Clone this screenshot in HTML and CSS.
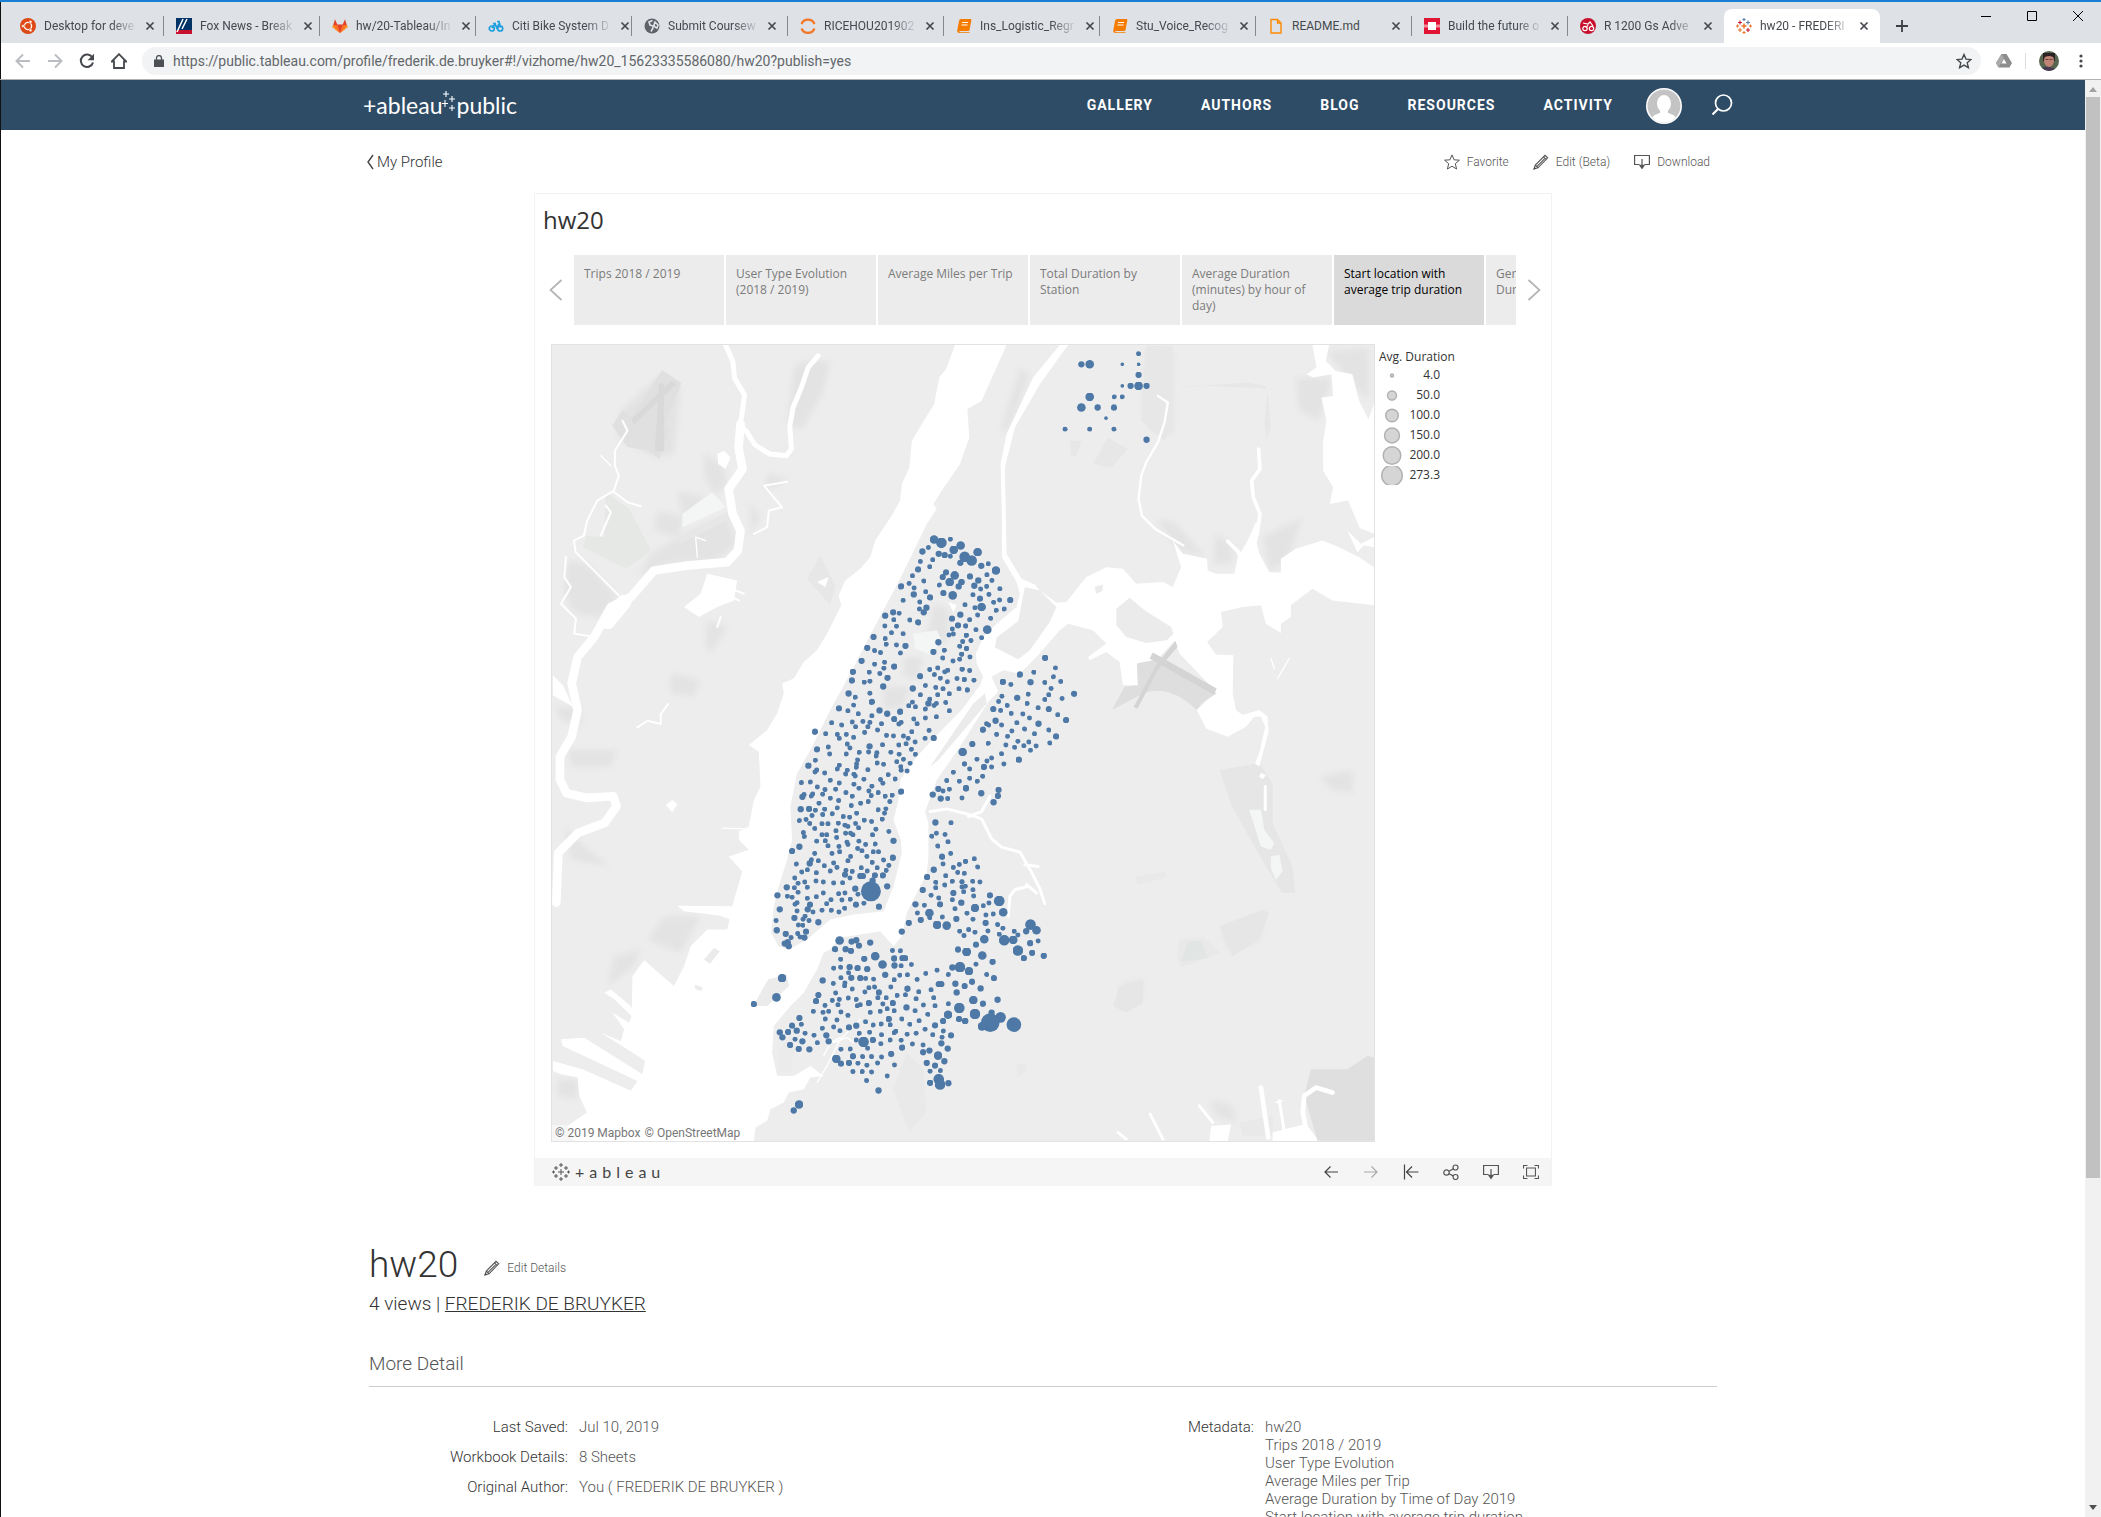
FILE: index.html
```html
<!DOCTYPE html>
<html lang="en">
<head>
<meta charset="utf-8">
<meta name="viewport" content="width=device-width, initial-scale=1">
<title>hw20 - FREDERIK DE BRUYKER | Tableau Public</title>
<link rel="stylesheet" href="styles.css">
</head>
<body>
<svg class="defs" width="0" height="0" aria-hidden="true">
  <symbol id="i-close" viewBox="0 0 16 16"><path d="M4.500 4.500l7 7M11.500 4.500l-7 7" fill="none" stroke="#45494d" stroke-width="1.700"/></symbol>
  <symbol id="i-pencil" viewBox="0 0 16 16"><path d="M1 15l1.300-4L12 1.300l2.700 2.500L5 13.800zM2.300 11L5 13.800M10.500 2.800l2.700 2.600M4 12.300l8-8" fill="none" stroke="#555" stroke-width="1.100"/><path d="M.5 15.500l.8-2.800 2 2z" fill="#444"/></symbol>
  <symbol id="i-download" viewBox="0 0 16 16"><path d="M5.500 10.500H.6V1.500h14.800v9h-4.900" fill="none" stroke="#555" stroke-width="1.200"/><path d="M8 5v7" stroke="#555" stroke-width="1.200"/><path d="M4.800 10.800h6.400L8 15.500z" fill="#555"/></symbol>
  <symbol id="i-book" viewBox="0 0 16 16"><path d="M5 1h9.500c.6 0 1 .5.900 1.100L13.500 12c-.1.600-.5 1-1.100 1H4c-1 0-1 1.300 0 1.300h9.500V15H3.500C1.800 15 1 13.800 1.300 12.300L3 3c.2-1.200.9-2 2-2z" fill="#f57c00"/><path d="M6 4.500h6M5.500 7h6" stroke="#fff" stroke-width="1"/></symbol>
</svg>

<header class="browser">
  <div class="tabstrip">
    <div class="tab"><svg class="fav" viewBox="0 0 16 16"><circle cx="8" cy="8" r="8" fill="#dd4814"/><circle cx="8" cy="8" r="3.600" fill="none" stroke="#fff" stroke-width="1.400"/><g fill="#fff" stroke="#dd4814" stroke-width=".6"><circle cx="3" cy="8" r="1.500"/><circle cx="10.500" cy="3.700" r="1.500"/><circle cx="10.500" cy="12.300" r="1.500"/></g></svg><span class="name">Desktop for deve</span><button aria-label="Close tab"><svg><use href="#i-close"/></svg></button></div>
    <div class="tab"><svg class="fav" viewBox="0 0 16 16"><path fill="#003366" d="M0 0h16v12H0z"/><path fill="#c8102e" d="M0 12h16v4H0z"/><path d="M1 14L7 1M6 11l5-10" stroke="#fff" stroke-width="1.500"/></svg><span class="name">Fox News - Break</span><button aria-label="Close tab"><svg><use href="#i-close"/></svg></button></div>
    <div class="tab"><svg class="fav" viewBox="0 0 16 16"><path fill="#e24329" d="M8 15L.5 9.300 3 1.200 5.300 6.500h5.400L13 1.200l2.500 8.100z"/><path fill="#fc6d26" d="M8 15L1 7h4.500zM8 15l7-8h-4.500z"/><path fill="#fca326" d="M1 7L.5 9.300 8 15zM15 7l.5 2.300L8 15z"/></svg><span class="name">hw/20-Tableau/In</span><button aria-label="Close tab"><svg><use href="#i-close"/></svg></button></div>
    <div class="tab"><svg class="fav" viewBox="0 0 16 16"><g fill="none" stroke="#1d9fe0" stroke-width="1.700"><circle cx="3.800" cy="10.500" r="2.500"/><circle cx="12.200" cy="10.500" r="2.500"/><path d="M4 10l3-4 2 4 2-4M9 3.500h2l1.500 6M5 5.500h3"/></g></svg><span class="name">Citi Bike System D</span><button aria-label="Close tab"><svg><use href="#i-close"/></svg></button></div>
    <div class="tab"><svg class="fav" viewBox="0 0 16 16"><circle cx="8" cy="8" r="7.500" fill="#5f6368"/><path d="M8.500 2.500L5 4l1 3 3 1v2l-2 3.500M11 4l3 3-1 3-2-1-1-2z" fill="none" stroke="#dee1e6" stroke-width="1.600"/></svg><span class="name">Submit Coursew</span><button aria-label="Close tab"><svg><use href="#i-close"/></svg></button></div>
    <div class="tab"><svg class="fav" viewBox="0 0 16 16"><path d="M1.500 6a7 7 0 0 1 13 0M1.500 10.500a7 7 0 0 0 13 0" fill="none" stroke="#f37726" stroke-width="2.200"/></svg><span class="name">RICEHOU201902</span><button aria-label="Close tab"><svg><use href="#i-close"/></svg></button></div>
    <div class="tab"><svg class="fav"><use href="#i-book"/></svg><span class="name">Ins_Logistic_Regr</span><button aria-label="Close tab"><svg><use href="#i-close"/></svg></button></div>
    <div class="tab"><svg class="fav"><use href="#i-book"/></svg><span class="name">Stu_Voice_Recog</span><button aria-label="Close tab"><svg><use href="#i-close"/></svg></button></div>
    <div class="tab"><svg class="fav" viewBox="0 0 16 16"><path d="M3 1.500h6.500L13 5v10H3zM9.500 1.500V5H13" fill="none" stroke="#fb8c00" stroke-width="1.400"/></svg><span class="name whole">README.md</span><button aria-label="Close tab"><svg><use href="#i-close"/></svg></button></div>
    <div class="tab"><svg class="fav" viewBox="0 0 16 16"><path d="M0 0h16v16H0z" fill="#e01434"/><path d="M4 4h8v8H4z" fill="#fff"/><path d="M0 6.500h4v3H0zM12 6.500h4v3h-4z" fill="#f58a9c"/></svg><span class="name">Build the future o</span><button aria-label="Close tab"><svg><use href="#i-close"/></svg></button></div>
    <div class="tab"><svg class="fav" viewBox="0 0 16 16"><circle cx="8" cy="8" r="8" fill="#c8102e"/><g fill="none" stroke="#fff" stroke-width="1.200"><circle cx="5" cy="10.500" r="2.200"/><circle cx="11.500" cy="10.500" r="2.200"/><path d="M3 5l5 1 2-2 3 4M6 10l2-3"/></g></svg><span class="name">R 1200 Gs Adve</span><button aria-label="Close tab"><svg><use href="#i-close"/></svg></button></div>
    <div class="tab active"><svg class="fav" viewBox="0 0 16 16"><path d="M8 5.500v5M5.500 8h5" stroke="#e8762d" stroke-width="1.500"/><path d="M4 2.500v4M2 4.500h4M12 10v4M10 12h4" stroke="#c72035" stroke-width="1.200"/><path d="M12 2.500v4M10 4.500h4M8 0v3M6.500 1.500h3" stroke="#5c7cab" stroke-width="1.200"/><path d="M4 10v4M2 12h4M8 13v3M6.500 14.500h3M1.500 6.500v3M0 8h3M14.500 6.500v3M13 8h3" stroke="#e8762d" stroke-width="1.100"/></svg><span class="name">hw20 - FREDERI</span><button aria-label="Close tab"><svg><use href="#i-close"/></svg></button></div>
    <button class="newtab" aria-label="New tab"><svg viewBox="0 0 16 16"><path d="M8 2v12M2 8h12" stroke="#3c4043" stroke-width="1.800"/></svg></button>
    <div class="winbtns">
      <button aria-label="Minimize"><svg viewBox="0 0 12 12"><path d="M1 6.500h10" stroke="#000"/></svg></button>
      <button aria-label="Maximize"><svg viewBox="0 0 12 12"><path d="M1.500 1.500h9v9h-9z" fill="none" stroke="#000"/></svg></button>
      <button aria-label="Close window"><svg viewBox="0 0 12 12"><path d="M1 1l10 10M11 1L1 11" stroke="#000"/></svg></button>
    </div>
  </div>
  <div class="toolbar">
    <button aria-label="Back"><svg viewBox="0 0 16 16"><path d="M15 8H2M8 1.500L1.500 8 8 14.500" fill="none" stroke="#b9bcc0" stroke-width="1.900"/></svg></button>
    <button aria-label="Forward"><svg viewBox="0 0 16 16"><path d="M1 8h13M8 1.500L14.500 8 8 14.500" fill="none" stroke="#b9bcc0" stroke-width="1.900"/></svg></button>
    <button aria-label="Reload"><svg viewBox="0 0 16 16"><path d="M13.300 4.500A6.200 6.200 0 1 0 14 9.500" fill="none" stroke="#45494d" stroke-width="2"/><path d="M15 .8v6.400H8.600z" fill="#45494d"/></svg></button>
    <button aria-label="Home"><svg viewBox="0 0 16 16"><path d="M.8 8.500L8 1.200l7.200 7.300H13V15H3V8.500z" fill="none" stroke="#45494d" stroke-width="1.800"/></svg></button>
    <div class="omnibox">
      <svg class="lock" viewBox="0 0 10 12"><path d="M0 4.500h10V12H0z" fill="#4d5156"/><path d="M2.500 5V3a2.500 2.500 0 0 1 5 0v2" fill="none" stroke="#4d5156" stroke-width="1.300"/></svg>
      <input type="text" aria-label="Address" value="https://public.tableau.com/profile/frederik.de.bruyker#!/vizhome/hw20_15623335586080/hw20?publish=yes">
      <button aria-label="Bookmark"><svg viewBox="0 0 16 16"><path d="M8 1.500l2 4.600 5 .4-3.800 3.300 1.200 4.900L8 12.100l-4.400 2.600 1.200-4.900L1 6.500l5-.4z" fill="none" stroke="#45494d" stroke-width="1.400"/></svg></button>
    </div>
    <svg class="drive" viewBox="0 0 16 16"><path d="M5.500 1h5L16 10l-2.500 4.500h-11L0 10z" fill="#8d8d8d"/><path d="M5.500 1L0 10l2.500 4.500L8 5.500z" fill="#aaa"/><path d="M8 6l2.500 4.500h-5z" fill="#fff"/></svg>
    <span class="rule"></span>
    <svg class="face" viewBox="0 0 20 20"><clipPath id="fc"><circle cx="10" cy="10" r="10"/></clipPath><g clip-path="url(#fc)"><path fill="#56664f" d="M0 0h20v20H0z"/><path fill="#2c2226" d="M4 2h12v8H4z"/><ellipse cx="10" cy="9.500" rx="5" ry="6.500" fill="#c08474"/><path d="M5 5q5-5 10 0l-1 1q-4-2-8 0z" fill="#2c2226"/><path d="M1 20q2-5 9-4t9 4z" fill="#473a52"/><path d="M6.500 8.500h3M10.500 8.500h3" stroke="#6b4036"/></g></svg>
    <button aria-label="Menu"><svg viewBox="0 0 16 16"><g fill="#45494d"><circle cx="8" cy="3" r="1.600"/><circle cx="8" cy="8" r="1.600"/><circle cx="8" cy="13" r="1.600"/></g></svg></button>
  </div>
</header>

<div class="viewport">
<div class="page">
  <div class="site-head">
    <div class="site-inner">
      <a href="#" class="logo" aria-label="tableau public"><span>+ableau</span><svg viewBox="0 0 14 20"><path d="M4 0v6M1 3h6M10 5v6M7 8h6M3 9v7M0 12.500h6M10 14v6M7 17h6" stroke="#fff" stroke-width="1.100"/></svg><span>public</span></a>
      <nav><a href="#">GALLERY</a><a href="#">AUTHORS</a><a href="#">BLOG</a><a href="#">RESOURCES</a><a href="#">ACTIVITY</a></nav>
      <svg class="avatar" viewBox="0 0 36 36"><clipPath id="av"><circle cx="18" cy="18" r="16.500"/></clipPath><circle cx="18" cy="18" r="18" fill="#fff"/><circle cx="18" cy="18" r="16.500" fill="#c4c4c4"/><g clip-path="url(#av)" fill="#fff"><ellipse cx="18" cy="15.500" rx="7" ry="8.500"/><path d="M14 21h8v4c7 2 9 4 9 11H5c0-7 2-9 9-11z"/></g></svg>
      <button class="search" aria-label="Search"><svg viewBox="0 0 22 22"><circle cx="12.500" cy="9" r="8" fill="none" stroke="#fff" stroke-width="1.700"/><path d="M7 15l-5.500 5.500" stroke="#fff" stroke-width="2.200"/></svg></button>
    </div>
  </div>

  <div class="subhead">
    <a href="#" class="back"><svg viewBox="0 0 8 16"><path d="M7 1L2 8l5 7" fill="none" stroke="#444" stroke-width="1.400"/></svg>My Profile</a>
    <button><svg viewBox="0 0 16 16"><path d="M8 .9l2.100 4.900 5.300.4-4.100 3.500 1.300 5.300L8 12.200 3.400 15l1.300-5.300L.6 6.200l5.300-.4z" fill="none" stroke="#555"/></svg>Favorite</button>
    <button><svg><use href="#i-pencil"/></svg>Edit (Beta)</button>
    <button><svg><use href="#i-download"/></svg>Download</button>
  </div>

  <section class="viz">
    <h2>hw20</h2>
    <div class="story">
      <button class="arrow" aria-label="Previous"><svg viewBox="0 0 14 22"><path d="M12.500 1L1.500 11l11 10" fill="none" stroke="#b4b4b4" stroke-width="1.700"/></svg></button>
      <div class="points">
        <button>Trips 2018 / 2019</button>
        <button>User Type Evolution (2018 / 2019)</button>
        <button>Average Miles per Trip</button>
        <button>Total Duration by Station</button>
        <button>Average Duration (minutes) by hour of day)</button>
        <button class="on">Start location with average trip duration</button>
        <button class="part">Ger<br>Dur</button>
      </div>
      <button class="arrow" aria-label="Next"><svg viewBox="0 0 14 22"><path d="M1.500 1l11 10-11 10" fill="none" stroke="#b4b4b4" stroke-width="1.700"/></svg></button>
    </div>

    <div class="sheet">
      <figure class="map">
        <!-- one screen pixel is three map units -->
        <svg viewBox="33 12 2472 2394" role="img" aria-label="Map of start locations by average trip duration">
          <defs>
            <filter id="soft" x="-20%" y="-20%" width="140%" height="140%"><feGaussianBlur stdDeviation="9"/></filter>
            <marker id="t" markerUnits="userSpaceOnUse" markerWidth="12" markerHeight="12" refX="6" refY="6"><circle cx="6" cy="6" r="5.500"/></marker>
            <marker id="s" markerUnits="userSpaceOnUse" markerWidth="16" markerHeight="16" refX="8" refY="8"><circle cx="8" cy="8" r="7.500"/></marker>
            <marker id="m" markerUnits="userSpaceOnUse" markerWidth="20" markerHeight="20" refX="10" refY="10"><circle cx="10" cy="10" r="9.500"/></marker>
            <marker id="l" markerUnits="userSpaceOnUse" markerWidth="26" markerHeight="26" refX="13" refY="13"><circle cx="13" cy="13" r="13"/></marker>
            <marker id="x" markerUnits="userSpaceOnUse" markerWidth="32" markerHeight="32" refX="16" refY="16"><circle cx="16" cy="16" r="16"/></marker>
          </defs>
          <path fill="#ededed" d="M33 12h2472v2394H33z"/>
          <g class="shade" filter="url(#soft)">
            <path d="M240 210l120-110 60 40-20 200-60 10-110-60z"/>
            <path d="M490 335l60 40 10 60-40 30-30-60zM410 450l90 20-70 70zM350 510l80 20-20 60-70-20zM330 640l120-70 110-50 30 90-60 50-150 10-90 40zM80 660l60 10 90 100-50 60-80-10-30-60zM500 840l60 20-50 80-15-20zM390 1000l90 20-20 50-70-10zM680 400l60 10-20 20-45 20zM630 480l30 50-30 60zM760 80l30-20 80 0-20 90-60 110-50 0zM40 1100l80 0 0 60-60-20z"/>
            <path d="M1180 790l50 20-10 100-60-10zM1090 950l60 0-20 70-40-10zM1030 1040l80 0-20 60-60 10zM1440 80l30 20-60 160-30 20z"/>
            <path d="M1820 30h80v250l-60-10-30-60zM2360 30l130-10v160l-60-60zM2270 110l110 0-40 130-60-30zM1850 540l50 0 100 110-80-20zM2170 590l120-60-50 140-50 20zM2030 580l50 30 0 60-60 0z"/>
            <path d="M80 1230h150l-20 50-120 0zM70 1460l60 60 80 60-120-20zM370 1730l110 0-60 110-100-40zM220 1850l80-20-20 50-80 60zM2050 1780l120-40-10 60-90 30zM2340 1310l100-20v70l-60-10zM2010 2280l70 20 10 50-60-20zM50 2220h60v60l-60-10zM1740 1940l70-20 0 50-50 20z"/>
          </g>
          <g>
            <path fill="#e0e0e0" d="M364 87l58 40-50 120 12 20-28 87-36-25-60-10-46-64 30-47 30 20z"/>
            <path fill="#d9d9d9" d="M280 250l-8-15 120-115 15 10zM355 127h15v205h-28z"/>
            <path fill="#e5e8e5" d="M195 455l70 50 66 125-75 55-130-65 10-35 55 5z"/>
            <path fill="#e7e7e7" d="M415 585l150-70 10 15-155 80zM800 715l40-70 45 90-15 60zM1820 15h80v240l-25 45-70-60z"/>
            <path fill="#e6e6e6" d="M2040 1290l120-20 40 60 0 120 60 130 8 80-40 0-60-100-90-160zM2040 1760l130-50 20 10-30 80-80 50zM1720 2000l20-60 70-20 0 70-50 30z"/>
            <path fill="#e9e9e9" d="M1920 1800l75-8 50 50-120 40-14-30zM1790 1610l90-15v20l-88 20zM1060 2250l40-110 50 50 8 130-50 60zM2100 2350l100-20v60h-90zM1430 2175l30-2 0 22-28 20z"/>
            <path fill="#e1e5e3" d="M1925 1865l20-60 40 0 20 50-50 8z"/>
            <path fill="#e7e7e7" d="M1660 370l45-80 60 35-50 55zM1590 300h35l-15 45h-15zM1910 140l210-15 60 10v8l-210-10zM2185 150l-10 100 6 50 14-40z"/>
          </g>

          <g class="water">
            <path d="M1245 12L1218 84 1198 109 1182 190 1142 255 1115 300 1108 380 1085 430 1080 480 1055 525 1005 600 990 650 960 685 915 720 895 765 903 795 860 880 830 930 790 965 760 1015 725 1030 730 1060 710 1120 680 1170 625 1215 655 1235 660 1340 640 1380 625 1460 595 1475 595 1500 625 1530 565 1550 605 1595 575 1700 410 1698 430 1715 535 1728 567 1738 560 1770 500 1770 450 1820 430 1880 400 1940 310 1862 275 1910 273 2005 195 1955 272 2030 265 2050 215 2020 250 2070 240 2105 180 2080 275 2140 313 2165 305 2205 130 2095 60 2100 65 2120 290 2225 270 2255 125 2190 36 2165V2195L60 2205 110 2215 115 2270 138 2320 80 2360 100 2406H640L645 2365 680 2345 690 2310 730 2290 745 2260 790 2250 810 2215 850 2210 810 2180 760 2210 710 2210 695 2140 700 2060 750 2000 790 1960 830 1890 850 1840 870 1830 895 1795 960 1785 1020 1775 1060 1820 1085 1790 1100 1720 1160 1600 1165 1550V1450L1155 1415 1190 1320 1260 1220 1345 1085 1375 1055 1355 1010 1390 990 1440 1000 1490 950 1560 870 1585 850 1660 870 1700 910 1645 950 1650 960 1700 935 1740 965 1750 1035H1795L1792 970 1840 960 1860 950 1905 902 1920 940 2030 1055 1972 1110 2000 1165 2065 1190 2120 1160 2145 1130 2165 1130 2178 1160 2160 1240 2148 1270 2160 1280 2188 1175 2185 1130 2160 1110 2110 1125 2090 1110 2080 1060 2082 945 2030 943 2003 905 2050 860 2045 815 2110 800 2165 795 2180 850 2225 878 2225 850 2255 830V795L2320 745 2380 780 2505 795V680L2460 650 2400 620 2350 600 2270 625 2225 655V697L2190 695 2160 640 2150 600 2165 540 2150 545 2125 600 2105 635 2090 620 2095 650 2085 700H2030L2005 690 2003 655 1930 640 1900 600 1925 680 1900 740 1870 725 1790 730 1750 685 1700 680 1640 710 1580 785 1550 787 1500 750 1485 732 1445 715 1400 640 1395 380 1425 260 1500 130 1585 12H1560L1480 110 1400 280 1382 370 1386 520 1386 650 1430 725 1440 760 1430 800 1370 850 1330 890 1308 940 1310 970 1330 1010 1320 1035 1265 1110 1180 1195 1130 1250 1080 1320 1075 1380 1060 1440 1082 1500 1085 1540 1060 1640 1030 1715 940 1725 870 1740 800 1800 745 1830 715 1820 692 1780 700 1700 715 1640 740 1560 755 1500 750 1400 770 1300 810 1230 870 1110 930 1000 1000 865 1080 715 1160 550 1190 505 1180 490 1205 450 1260 370 1288 290 1282 205 1325 180 1400 12z"/>
            <path d="M2320 12h50l-10 48 30 30 50 10 20 80 28 55 17-45v390l-43-18-35-82-55 10 10-50-30-50v-90l10-60-15-70 35-5-5-65-55 10-20-10 30-20z"/>
            <path d="M2425 570l40 40 40-20v30l-30-5-20 20z"/>
            <path class="pond" d="M1120 880l70-10 15 30-30 45-50-20zM425 520l90-65 40 45-130 60zM2130 1410h35l10 60 30 40-10 20-30-10zM2195 1550l25-5 10 50-20 25-15-35z"/>
            <path d="M430 800l50-40 20-60 90 20-10 60-50 20-55 30zM530 340l20-10 20 20-15 35-22-15zM36 1005l30 30 30 65-60-35zM375 1395l20-15 15 12-15 25zM2010 2406l5-45 60-5-10 50zM2200 2380l40-10 60-15 40 51h-140zM830 725l35-15-10 30zM1225 785l25 10-10 20zM190 1960l20-10 60 50-6 6zM2165 1298l15 8-10 12-10-8z"/>
          </g>
          <path fill="#dfdfdf" d="M2295 2270l20-80 110 0 60-40 20 5v250h-170z"/>
          <path fill="#dedede" d="M1755 1040l40-5-3-65 50-10 60 20 130 80-40 25-20 25q-95-90-180-40l-75 40z"/>
          <path fill="#d4d4d4" d="M1840 937l192 108-10 18-192-108zM1908 902l6 18-60 70-60 115-12-4 70-130z"/>
          <g class="stream">
            <path stroke-width="15" d="M555 12l22 50 5 50 30 50-8 60-6 30 20 20 25 40 45 28 50 5 15-20-5-70 10-55 25-60 20-60 30-35"/>
            <path stroke-width="26" d="M600 250l-6 70 12 65-42 60 12 75 24 50-8 60-32 35-120 10-100 15-70 80-60 30-50 90-50 60-18 80 18 80-18 80-35 60v70l20 40 60 14 80-5 10 30-35 50-80 30-60 60-6 150"/>
            <path stroke-width="44" d="M250 785l-50 60"/>
            <path stroke-width="6" d="M245 240l15 30-38 60 0 45 12 30-15 45-50 30-30 60-10 45-30 15 5 35 130 130M75 650l-5 60 20 30-30 50 45 45-5 45 60 10M220 455l40 30 40 12M180 585l30-70-15-20M670 435l70-12M675 440l50 60-40 10-5 50-40 20M290 1162l30-20 40 10 0-30 22-30M540 830l-10 30M560 740l50 20M555 760l40 20"/>
            <path stroke-width="7" d="M1855 165l30 20-10 60-20 60-35 60-15 40-8 70 10 50 40 40 50 30 35 20"/>
            <path stroke-width="11" d="M2158 325l4 60-25 35 5 50 20 50-8 60-18 60M2065 602l30 30"/>
            <path stroke-width="9" d="M1170 1415l50-8 60 15 45 15 30 60 30 25 55 15 35 60 25 50 15 45M1285 1430l40-15 25-45M1455 1575l40 5M1465 1640l-40 10-15 20-5 60M1460 1635l30 25M1870 2400l-38-75M2165 1240l-12 30M2178 1340v70M2220 2285l15 90M1735 2380l25 20M1980 2300l40 50"/>
            <path stroke-width="14" d="M2165 2245l22 150M2380 2260l-50-15-35 25-4 50 15 80"/>
            <path stroke-width="4" d="M545 1465l90 3M2195 955l10 30M2250 955l-35 60M180 345l30 30M470 650l-5-60 30 10M880 2110l40-15 20 15M850 2150l20-40 30-15M2210 2290l20-5M830 2230l30-50 40-80 60-60"/>
          </g>
          <g fill="#ebebeb">
            <path d="M1730 805l40-33 45 38 80 50 7 20-20 20-62 8-60-18-30-35zM1455 740l45 10 50 50-20 45-60 85-35 27-70-35 5-30 65-50zM1665 740l25-8-2 20-18 8zM1335 1060l-35 30-130 190 25-20 145-170zM638 2000l45-80 55-15 8 35-66 60zM490 1860l30-35 18 10-30 38zM462 1935l25 10-5 10-18-6zM712 2140l40-60 10 50-10 70-35 0z"/>
          </g>

          <g class="dots">
            <polyline class="x" points="1204,607 1274,649 1295,660"/>
            <polyline class="l" points="1182,597 1262,615 1241,628 1229,725 1244,705 1238,765"/>
            <polyline class="m" points="1147,633 1196,640 1214,644 1134,687 1083,738 1121,762 1210,758 1256,738 1264,725 1218,696 1208,710 1159,802 1151,816 1035,826 1059,816 1134,846 1000,890 1096,917 981,923 1195,906 1180,935 1062,979 1140,1008 964,962 938,995 935,1021 1042,1013 1029,1039 1118,1045 1254,855 1261,823 1236,835 925,1060 896,1105 1018,1111 1041,1121 1080,1115 1062,1137 824,1175 995,1085 1165,1090 1181,1194 1170,771 1261,667"/>
            <polyline class="s" points="1231,596 1165,621 1231,647 1141,663 1178,658 1169,679 1117,706 1151,722 1107,729 1122,743 1157,754 1089,780 1139,785 1138,806 1198,734 1275,793 1077,819 1061,838 1109,839 1034,857 1069,858 1054,877 1089,880 1035,895 1038,912 1069,914 1081,938 1003,931 1021,937 1033,966 1003,972 1031,984 1019,1000 987,996 972,1026 989,1023 989,1059 945,1071 940,1095 923,1112 954,1121 995,1127 968,1144 936,1146 989,1147 983,1160 946,1160 904,1155 874,1148 856,1181 891,1183 897,1195 918,1183 940,1192 973,1177 1012,1170 1024,1151 1039,1186 1060,1188 1090,1188 1104,1195 1115,1175 1076,1152 1083,1147 1121,1137 1131,1151 1126,1100 1106,1097 1117,1086 1156,1107 1169,1077 1189,1090 1182,1096 1193,1064 1141,1064 1156,1036 1187,1042 1209,1046 1228,1061 1217,1087 1228,1112 1189,1130 1156,1134 1167,1171 1155,1195 1125,1206 1183,1003 1169,988 1193,983 1214,995 1223,990 1201,1014 1222,1025 1251,1015 1273,1018 1257,1046 1282,1049 1266,987 1239,962 1259,957 1265,942 1208,953 1213,930 1259,918 1268,904 1280,925 1227,884 1240,881 1237,866 1277,857 1279,885"/>
            <g transform="translate(1260)">
              <polyline class="t" points="488,70 537,70 439,232 488,135"/>
              <polyline class="s" points="537,38 464,168 488,168 316,265 390,265 463,265"/>
              <polyline class="m" points="365,70 537,102 513,135 561,135 414,200 463,200 561,297"/>
              <polyline class="l" points="390,70 537,135 390,168 365,200 53,635 108,690 82,868 65,800"/>
              <polyline class="m" points="64,676 30,708 55,720 43,736 151,779 256,953 129,1025 212,1026 172,1073 343,1061 267,1107 319,1140 236,1151 289,1189 107,1142 100,1107 69,1169 37,1212 180,1003 5,725 60,775"/>
              <polyline class="s" points="85,670 81,703 96,720 80,738 62,746 39,763 87,762 120,745 101,786 119,779 45,802 109,810 133,806 53,824 29,838 92,834 48,868 17,857 65,892 19,885 33,901 19,925 30,950 5,942 29,991 7,987 42,1020 13,1018 22,1050 287,983 222,996 281,1010 255,1027 303,1024 153,1033 274,1045 267,1064 205,1062 255,1078 307,1075 126,1068 116,1084 142,1096 122,1111 202,1090 235,1103 154,1120 189,1122 209,1134 294,1124 80,1151 86,1155 125,1155 171,1148 156,1173 194,1167 110,1183 143,1189 224,1181 267,1170 85,1210 174,1204 207,1206 138,1215 164,1222 192,1217 229,1218 270,1209"/>
            </g>
            <g transform="translate(0 1200)">
              <circle cx="992" cy="455" r="30"/>
              <polyline class="s" points="864,21 921,12 929,24 957,37 985,36 1010,38 1027,14 1052,37 1077,43 1076,15 1098,11 1114,28 1126,43 1090,58 1070,65 1110,70 1101,93 1082,80 1083,91 1044,104 1065,117 1030,73 1011,69 1008,48 983,89 952,60 949,72 948,82 897,76 891,87 921,91 916,102 868,42 918,42 825,61 829,90 824,96 853,99 870,121 810,126 783,128 831,141 854,149 886,148 897,129 941,103 945,108 971,118 941,133 956,145 995,139 986,153 993,167 1021,119 1028,130 1014,158 1035,169 1056,166 1049,185 1037,207 1033,220 1014,210 1026,238 984,185 961,190 933,197 936,169 917,158 895,182 870,175 847,163 817,162 813,168 791,164 836,190 853,208 891,204 825,211 847,224 876,222 815,227 797,239 808,251 777,242 823,266 845,252 863,252 894,250 909,230 928,232 949,220 946,251 955,264 972,241 994,245 1007,268 997,285 1046,275 914,256 923,260 887,273 889,293 916,280 931,280 938,285 845,285 859,285 855,303 829,304 789,278 792,290 863,318 896,320 920,307 923,314 956,304 976,314 1005,313 952,326 965,333 999,336 1015,336 980,350 931,350 923,363 898,336 875,341 823,341 813,360 834,363 852,378 880,370 890,383 870,394 828,399 801,390 784,397 768,373 763,415 773,431 793,427 827,424 849,427 880,430 907,429 929,415 936,395 917,392 963,384 981,394 996,368 1011,384 1030,361 1038,392 1046,377 762,444 773,458 801,443 755,473 741,470 770,489 764,494 801,476 828,471 849,460 872,480 859,492 895,462 914,460 905,481 930,479 953,464 971,491 913,506 896,517 873,512 845,512 818,517 770,514 794,530 788,539 806,543 774,556 787,557 772,582 752,594 779,592 707,543 1240,97 1220,122 1258,124 1228,148 1209,153 1223,176 1266,174 1274,72 1233,249 1215,284 1175,289 1189,280 1224,306 1193,319 1232,341 1209,373 1240,383 1258,374 1277,365 1253,398 1217,408 1187,428 1214,436 1237,425 1266,426 1187,444 1173,467 1196,475 1153,497 1132,520 1169,534 1207,532 1237,480 1245,507 1259,575 1272,588"/>
              <polyline class="m" points="830,28 988,19 804,77 1083,155 786,171 781,208 806,207 777,321 755,334 1060,303 1058,354 808,371 1004,407 1028,407 960,409 968,409 997,423 914,405 945,447 947,495 739,443 711,467 718,509 809,495 802,509 762,535 834,548 709,572 736,583 797,576 792,594 1016,501 1041,440 1195,147 1178,164 1202,176 1278,145 1186,248 1206,351 1181,390 1161,412 1148,451 1126,494 1142,541 1106,550 1085,576 1200,494 1240,460 1264,489 1249,538 1254,630 745,620 742,608 733,612"/>
              <polyline class="l" points="1268,36 1191,556 1220,558 1280,637 898,603 1005,650 1027,675 708,774 725,716 776,1096 1168,520"/>
              <polyline class="m" points="916,629 932,634 934,606 948,602 956,618 990,609 884,629 972,658 981,689 952,686 928,683 1035,706 1063,678 1062,657 1087,656 1095,656 933,715 960,716 847,723 640,794 760,1114 1237,684 1016,759 1102,748 1058,791 986,791 1099,804 1046,839 834,767 827,785 777,836 755,859 769,874 718,879 743,878 726,894 749,917 786,906 775,929 807,930 865,906 858,888 926,864 948,859 998,902 938,951 926,971 902,973 1053,944 1086,925 1015,1054 1196,734 1204,734 1246,733 1250,759 1185,858 1233,888 1223,928 1168,934 1160,971 1185,979 1213,966 1204,912 1149,939 1170,1031 1225,1032 1275,845 1257,839 1209,845"/>
              <polyline class="s" points="901,659 901,683 880,686 925,700 902,715 879,732 914,731 913,739 936,749 886,761 976,717 1000,719 1057,633 1081,634 1083,679 1114,675 1079,707 1102,706 1062,721 1131,720 1157,702 1191,692 1225,705 1273,740 1052,743 1003,743 986,745 974,758 1013,775 1038,775 1071,768 1096,766 1136,757 1173,751 1128,778 1181,775 1185,799 1150,797 1163,825 1125,814 1225,793 1028,794 1041,808 1062,814 1020,816 990,819 960,796 951,799 948,780 924,776 897,780 876,783 893,796 854,798 819,816 848,819 865,816 902,818 923,828 890,842 855,839 783,855 846,867 880,863 899,874 794,882 821,888 764,900 831,910 976,847 999,857 1023,854 1050,856 1085,839 1109,855 1137,844 1155,870 1178,886 1210,875 1206,894 1128,882 1101,885 1067,876 1062,880 1024,886 988,879 957,882 948,902 1022,913 1050,902 1083,903 1117,914 1149,917 982,927 930,929 902,930 967,952 994,952 1024,953 953,972 980,978 1012,971 1063,977 1041,1010 994,998 966,997 938,997 979,1024 1170,996 1201,994"/>
              <polyline class="x" points="970,908 1196,1020 1200,1036 1258,806 1260,683"/>
              <polyline class="l" points="888,959 1194,949 1224,826"/>
            </g>
            <g transform="translate(1260 1200)">
              <circle cx="91" cy="850" r="28"/><circle cx="162" cy="856" r="22"/>
              <polyline class="s" points="13,72 29,87 51,58 81,63 95,54 125,41 132,72 95,81 68,109 29,115 52,124 212,31 43,357 16,365 53,382 13,401 38,425 60,427 6,427 6,442 16,440 11,456 39,450 41,469 70,498 87,490 21,521 39,539 78,526 100,523 26,570 45,578 84,574 113,555 129,566 118,584 163,575 174,586 235,604 48,674 80,705"/>
              <polyline class="m" points="177,59 72,81 116,150 114,168 101,187 64,160 18,145 90,467 77,550 48,615 199,575 211,611 217,640 192,656 252,649 98,667 102,716 36,727 62,747 14,740 69,793 113,781 16,845 95,820 67,860"/>
              <polyline class="l" points="45,505 130,518 73,599 160,601 230,572 20,637 67,648 27,695 40,782 66,861"/>
              <polyline class="x" points="118,484 212,555 133,602 174,633 45,824 122,834"/>
            </g>
          </g>
        </svg>
        <figcaption><a href="#">© 2019 Mapbox</a><a href="#">© OpenStreetMap</a></figcaption>
      </figure>
      <aside class="legend">
        <h3>Avg. Duration</h3>
        <ul>
          <li><svg viewBox="0 0 22 19"><circle cx="11" cy="9.500" r="1.500"/></svg>4.0</li>
          <li><svg viewBox="0 0 22 19"><circle cx="11" cy="9.500" r="4.500"/></svg>50.0</li>
          <li><svg viewBox="0 0 22 19"><circle cx="11" cy="9.500" r="6.300"/></svg>100.0</li>
          <li><svg viewBox="0 0 22 19"><circle cx="11" cy="9.500" r="7.500"/></svg>150.0</li>
          <li><svg viewBox="0 0 22 19"><circle cx="11" cy="9.500" r="8.800"/></svg>200.0</li>
          <li><svg viewBox="0 0 22 19"><circle cx="11" cy="9.500" r="10.300"/></svg>273.3</li>
        </ul>
      </aside>
    </div>

    <footer class="vizbar">
      <a href="#" class="brand" aria-label="tableau"><svg viewBox="0 0 18 18"><path d="M9 6v6M6 9h6M9 0v4M7 2h4M9 14v4M7 16h4M4 3v4M2 5h4M14 3v4M12 5h4M4 11v4M2 13h4M14 11v4M12 13h4M1.500 7.500v3M0 9h3M16.500 7.500v3M15 9h3" stroke="#555"/></svg>+ableau</a>
      <button aria-label="Undo"><svg viewBox="0 0 16 16"><path d="M15 8H2M7.500 2.500L2 8l5.500 5.500" fill="none" stroke="#444" stroke-width="1.200"/></svg></button>
      <button aria-label="Redo"><svg viewBox="0 0 16 16"><path d="M1 8h13M8.500 2.500L14 8l-5.500 5.500" fill="none" stroke="#aaa" stroke-width="1.200"/></svg></button>
      <button aria-label="Revert"><svg viewBox="0 0 16 16"><path d="M15.500 8H4M9 2.500L3.500 8 9 13.500M1.500.5v15" fill="none" stroke="#444" stroke-width="1.200"/></svg></button>
      <button aria-label="Share"><svg viewBox="0 0 16 16"><g fill="none" stroke="#555" stroke-width="1.200"><circle cx="3.500" cy="8.500" r="2.700"/><circle cx="12.500" cy="3.500" r="2.500"/><circle cx="12.500" cy="13" r="2.500"/><path d="M6 7.200l4.300-2.400M6 9.700l4.300 2.200"/></g></svg></button>
      <button aria-label="Download"><svg><use href="#i-download"/></svg></button>
      <button aria-label="Full screen"><svg viewBox="0 0 18 16"><path d="M4 3.500h10v9H4zM.6 4V.6H5M13 .6h4.400V4M17.400 12v3.400H13M5 15.400H.6V12" fill="none" stroke="#555" stroke-width="1.200"/></svg></button>
    </footer>
  </section>

  <section class="details">
    <div class="heading"><h1>hw20</h1><button><svg><use href="#i-pencil"/></svg>Edit Details</button></div>
    <p class="views">4 views | <a href="#">FREDERIK DE BRUYKER</a></p>
    <h2>More Detail</h2>
    <div class="meta">
      <dl>
        <dt>Last Saved:</dt><dd>Jul 10, 2019</dd>
        <dt>Workbook Details:</dt><dd>8 Sheets</dd>
        <dt>Original Author:</dt><dd>You ( FREDERIK DE BRUYKER )</dd>
      </dl>
      <dl>
        <dt>Metadata:</dt><dd>hw20<br>Trips 2018 / 2019<br>User Type Evolution<br>Average Miles per Trip<br>Average Duration by Time of Day 2019<br>Start location with average trip duration</dd>
      </dl>
    </div>
  </section>
</div>
<div class="scroll" aria-hidden="true"><i class="up"></i><i class="thumb"></i><i class="down"></i></div>
</div>
</body>
</html>
```
FILE: styles.css
```css
* { box-sizing: border-box; }
body { margin: 0; height: 100vh; display: flex; flex-direction: column; overflow: hidden; background: #fff; color: #333; font: 12px/16px Roboto, "Liberation Sans", sans-serif; }
button { border: 0; padding: 0; margin: 0; background: none; font: inherit; color: inherit; display: flex; align-items: center; justify-content: center; }
a { color: inherit; text-decoration: none; }
svg { display: block; flex: none; width: 16px; height: 16px; }
h1, h2, h3, p, ul, dl, dd, figure { margin: 0; padding: 0; font-weight: inherit; }
.defs { position: absolute; width: 0; height: 0; }

.browser { border-top: 2px solid #1a7fd4; border-bottom: 1px solid #b0b0b0; flex: none; }
.tabstrip { display: flex; height: 41px; padding: 7px 0 0 7px; background: #dee1e6; border-left: 1px solid #111; }
.tab { flex: 0 1 156px; min-width: 0; display: flex; align-items: center; gap: 8px; padding: 0 8px 0 12px; height: 34px; font-size: 12px; color: #45494d; position: relative; }
.tab::after { content: ""; position: absolute; right: 0; top: 7px; height: 20px; border-right: 1px solid #85898d; }
.tab:nth-child(11)::after, .tab.active::after { display: none; }
.tab.active { background: #fff; border-radius: 8px 8px 0 0; }
.name { flex: 1; white-space: nowrap; mask-image: linear-gradient(90deg, #000 75%, rgba(0,0,0,.15)); }
.name.whole { mask-image: none; }
.newtab { width: 44px; }
.winbtns { margin-left: auto; display: flex; height: 14px; }
.winbtns button { width: 46px; }
.winbtns svg { width: 12px; height: 12px; }
.toolbar { display: flex; align-items: center; height: 36px; padding: 0 12px 0 6px; border-left: 1px solid #111; }
.toolbar > button { width: 32px; }
.toolbar > button:last-child { width: 16px; }
.omnibox { flex: 1; display: flex; align-items: center; height: 28px; margin: 0 15px 0 7px; padding: 0 9px 0 12px; background: #f1f3f4; border-radius: 14px; }
.lock { width: 10px; height: 12px; }
.omnibox input { flex: 1; margin: 0; border: 0; padding: 0 9px; background: none; font: 14px/20px Roboto, sans-serif; color: #63676b; }
.rule { width: 1px; height: 16px; margin: 0 13px; background: #ddd; }
.face { width: 20px; height: 20px; margin-right: 14px; }

.viewport { flex: 1; min-height: 0; display: flex; border-left: 1px solid #111; }
.page { flex: 1; min-width: 0; overflow: hidden; font-weight: 300; }
.scroll { width: 16px; display: flex; flex-direction: column; align-items: center; background: #f1f1f1; }
.thumb { width: 14px; flex: 1080; background: #c1c1c1; }
.up { height: 8px; margin: 4px 0 5px; border: 4px solid transparent; border-top-width: 3px; border-bottom: 5px solid #a3a3a3; }
.down { order: 2; height: 8px; margin-bottom: 3px; border: 4px solid transparent; border-top: 5px solid #505050; }
.scroll::after { content: ""; order: 1; flex: 327; }

.site-head { background: #2e4c66; color: #fff; }
.site-inner { display: flex; align-items: center; height: 50px; max-width: 1380px; margin: 0 auto; padding-left: 10px; }
.logo { display: flex; align-items: center; font: 23px/28px Lato, sans-serif; }
.logo svg { width: 14px; height: 20px; margin-top: -8px; }
nav { display: flex; gap: 48px; margin: 0 33px 0 auto; font-size: 14px; font-weight: 700; letter-spacing: 1px; }
.avatar { width: 36px; height: 36px; margin: 2px 29px 0 0; }
.search svg { width: 22px; height: 22px; }

.subhead { display: flex; align-items: center; height: 63px; max-width: 1354px; margin: 0 auto; padding-right: 10px; gap: 24px; color: #555; }
.back { display: flex; align-items: center; gap: 3px; margin-right: auto; font-size: 15px; color: #333; }
.back svg { width: 8px; height: 16px; }
.subhead button, .heading button { gap: 7px; font-size: 12px; font-weight: 300; }

.viz { max-width: 1018px; margin: 0 auto; border: 1px solid #f3f3f3; border-bottom: 0; font: 12px/16px "Open Sans", sans-serif; }
.viz h2 { padding: 10px 8px 19px; font-size: 24px; line-height: 32px; }
.story { display: flex; gap: 11px; padding: 0 10px 0 14px; height: 70px; }
.arrow svg { width: 14px; height: 22px; }
.points { flex: 1; min-width: 0; display: flex; gap: 2px; overflow: hidden; }
.points button { flex: 0 0 150px; align-items: flex-start; justify-content: flex-start; padding: 11px 8px 0 10px; background: #ececec; color: #7b7b7b; text-align: left; }
.points .on { background: #dadada; color: #000; }
.points .part { flex: 1 1 0; min-width: 0; padding-right: 0; }
.sheet { display: flex; gap: 4px; padding: 19px 16px 16px; }
.map { position: relative; flex: 0 1 824px; min-width: 0; border: 1px solid #e2e2e2; }
.map > svg { width: 100%; height: auto; }
.map figcaption { position: absolute; left: 0; bottom: 0; display: flex; gap: 4px; padding: 0 3px; background: rgba(255,255,255,.5); font-family: Roboto, sans-serif; color: #777; }
.shade path { fill: #e3e3e3; }
.water path { fill: #fff; }
.water .pond { fill: #f4f6f5; }
.stream path { fill: none; stroke: #fff; stroke-linejoin: round; stroke-linecap: round; }
.dots circle, marker circle { fill: #4e79a7; }
.dots polyline { fill: none; }
.t { marker: url(#t); }
.s { marker: url(#s); }
.m { marker: url(#m); }
.l { marker: url(#l); }
.x { marker: url(#x); }
.legend { padding-top: 5px; }
.legend h3 { font-size: 12px; }
.legend ul { list-style: none; }
.legend li { display: flex; align-items: center; justify-content: space-between; width: 61px; height: 20px; }
.legend li svg { width: 22px; height: 19px; margin-left: 2px; }
.legend circle { fill: #d5d5d5; stroke: #b0b0b0; stroke-width: 1.4px; }
.vizbar { display: flex; align-items: center; gap: 24px; height: 28px; padding: 0 12px 0 17px; background: #f5f5f5; }
.brand { display: flex; align-items: center; gap: 5px; margin-right: auto; font: 16px/20px Lato, sans-serif; letter-spacing: 5px; color: #444; }
.brand svg { width: 18px; height: 18px; }

.details { max-width: 1348px; margin: 57px auto 0; }
.heading { display: flex; align-items: center; gap: 26px; color: #333; }
.heading h1 { font-size: 37px; line-height: 44px; font-weight: 300; }
.heading button { margin-top: 6px; color: #555; }
.views { padding-top: 3px; font-size: 19px; line-height: 28px; }
.views a { text-decoration: underline; }
.details h2 { margin-top: 32px; padding-bottom: 8px; border-bottom: 1px solid #ccc; font-size: 19px; line-height: 28px; color: #555; }
.meta { display: grid; grid-template-columns: 686px 1fr; padding-top: 31px; font-size: 15px; line-height: 18px; }
.meta dl { display: grid; grid-template-columns: 199px 1fr; gap: 12px 11px; align-content: start; }
.meta dt { text-align: right; }
.meta dd { color: #555; }
```
